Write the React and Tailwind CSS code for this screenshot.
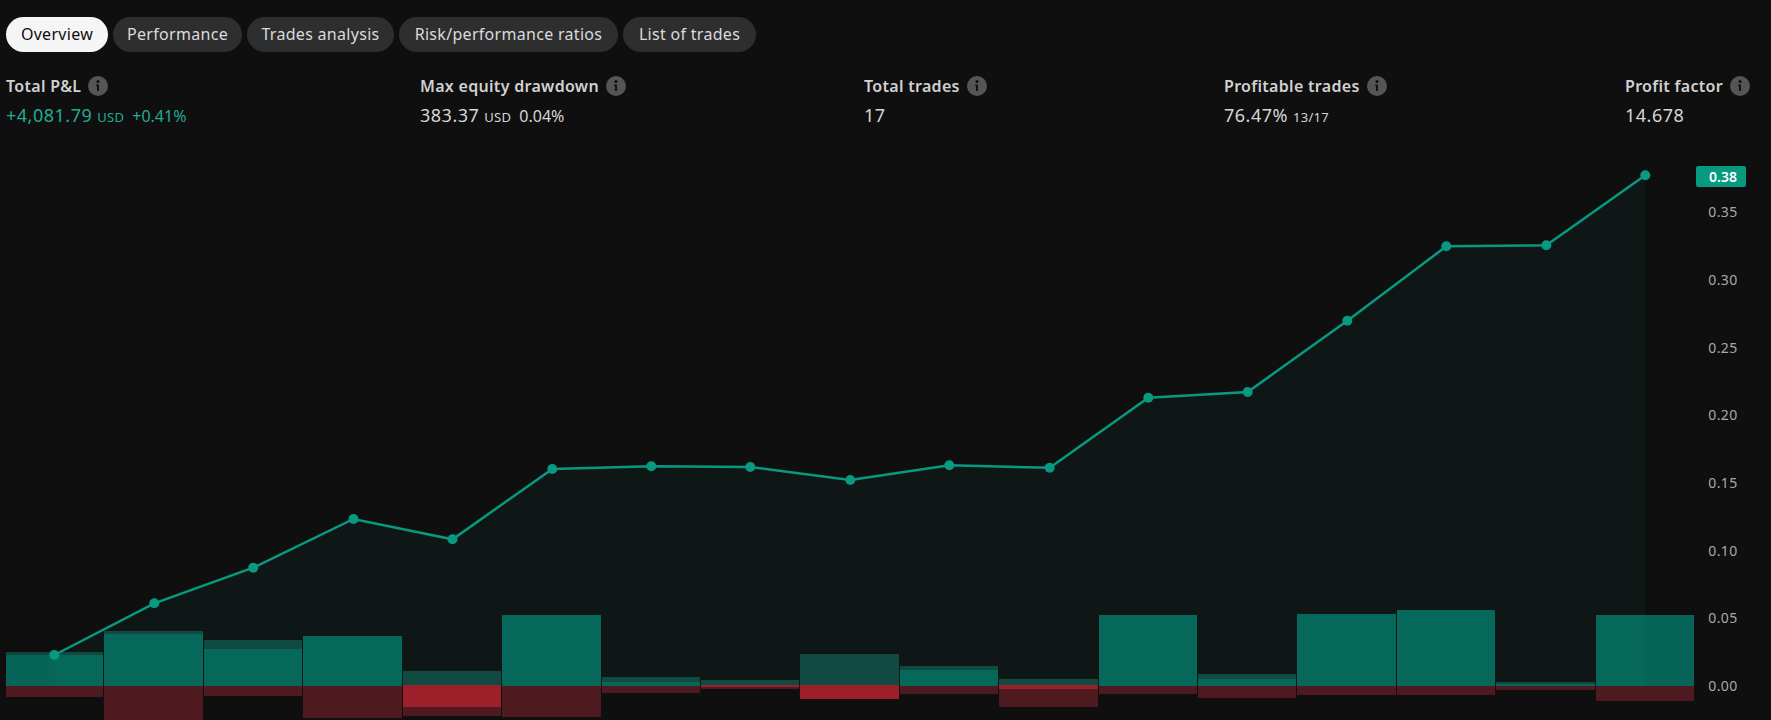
import React from "react";

const tabs = [
  { label: "Overview", width: "w-[102px]", active: true },
  { label: "Performance", width: "w-[129px]" },
  { label: "Trades analysis", width: "w-[147px]" },
  { label: "Risk/performance ratios", width: "w-[219px]" },
  { label: "List of trades", width: "w-[133px]" },
];

const points = [
  [54.3, 655], [154.3, 603.3], [253.2, 567.7], [353.5, 519], [452.5, 539.3],
  [552.3, 469], [651.3, 466.3], [750.3, 467], [850.3, 480], [949.3, 465.3],
  [1049.7, 467.7], [1148.3, 397.7], [1247.7, 392], [1347.3, 320.7], [1446.3, 246.3],
  [1546.3, 245.3], [1645.3, 175.3],
];

// top = dark band start, mid = solid green start, bright = end of the bright red part
const bars = [
  { x: 6, end: 103, top: 652, mid: 655, bottom: 697 },
  { x: 104, end: 203, top: 631, mid: 634, bottom: 722 },
  { x: 204, end: 302, top: 640, mid: 649, bottom: 696 },
  { x: 303, end: 402, top: 636, mid: 636, bottom: 718 },
  { x: 403, end: 501, top: 671, mid: 686, bright: 707, bottom: 716 },
  { x: 502, end: 601, top: 615, mid: 615, bottom: 717 },
  { x: 602, end: 700, top: 677, mid: 682, bottom: 693 },
  { x: 701, end: 799, top: 680, mid: 686, bright: 687, bottom: 689 },
  { x: 800, end: 899, top: 654, mid: 686, bright: 699, bottom: 699 },
  { x: 900, end: 998, top: 666, mid: 670, bottom: 694 },
  { x: 999, end: 1098, top: 679, mid: 686, bright: 689, bottom: 707 },
  { x: 1099, end: 1197, top: 615, mid: 615, bottom: 694 },
  { x: 1198, end: 1296, top: 674, mid: 679, bottom: 698 },
  { x: 1297, end: 1396, top: 614, mid: 614, bottom: 695 },
  { x: 1397, end: 1495, top: 610, mid: 610, bottom: 695 },
  { x: 1496, end: 1595, top: 682, mid: 684, bottom: 690 },
  { x: 1596, end: 1694, top: 615, mid: 615, bottom: 701 },
];

const ticks = [
  ["0.35", 212], ["0.30", 280], ["0.25", 347.5], ["0.20", 415], ["0.15", 483],
  ["0.10", 550.5], ["0.05", 618], ["0.00", 686],
];

const InfoIcon = () => (
  <svg width="20" height="20" viewBox="0 0 20 20" className="shrink-0">
    <circle cx="10" cy="10" r="10" fill="#555555" />
    <circle cx="10" cy="5.5" r="1.6" fill="#111111" />
    <path d="M8.2 8.6h2.8v6.4h-2v-4.8h-.8z" fill="#111111" />
  </svg>
);

const Stat = ({ label, children }) => (
  <div className="flex flex-col">
    <div className="flex h-5 items-center gap-[7px] text-base font-semibold tracking-[0.3px] text-[#d1d1d1]">
      <span>{label}</span>
      <InfoIcon />
    </div>
    <div className="mt-[5px] flex h-5 items-baseline whitespace-nowrap text-[#d6d6d6]">
      {children}
    </div>
  </div>
);

const Big = ({ children }) => (
  <span className="text-lg tracking-[0.5px]">{children}</span>
);
const Small = ({ children }) => (
  <span className="ml-[5px] text-[13px] tracking-[0.3px]">{children}</span>
);
const Pct = ({ children }) => (
  <span className="ml-[8px] text-base">{children}</span>
);

export default function App() {
  const line = points.map((p) => p.join(",")).join(" ");
  const area = `54.3,686 ${line} 1645.3,686`;

  return (
    <div className="h-[720px] w-full overflow-hidden bg-[#0f0f0f] pt-[17px] font-['Noto_Sans',sans-serif]">
      <div className="flex gap-[5px] pl-[6px]">
        {tabs.map((tab) => (
          <div
            key={tab.label}
            className={`flex h-[35px] items-center justify-center rounded-full pb-px text-base tracking-[0.3px] ${tab.width} ${
              tab.active ? "bg-[#f5f5f5] text-[#0f0f0f]" : "bg-[#2e2e2e] text-[#dbdbdb]"
            }`}
          >
            {tab.label}
          </div>
        ))}
      </div>

      <div className="mt-6 grid h-[54px] grid-cols-[414px_444px_360px_401px_auto] pl-[6px]">
        <Stat label="Total P&L">
          <div className="flex items-baseline text-[#22ab94]">
            <Big>+4,081.79</Big>
            <Small>USD</Small>
            <Pct>+0.41%</Pct>
          </div>
        </Stat>
        <Stat label="Max equity drawdown">
          <Big>383.37</Big>
          <Small>USD</Small>
          <Pct>0.04%</Pct>
        </Stat>
        <Stat label="Total trades">
          <Big>17</Big>
        </Stat>
        <Stat label="Profitable trades">
          <Big>76.47%</Big>
          <Small>13/17</Small>
        </Stat>
        <Stat label="Profit factor">
          <Big>14.678</Big>
        </Stat>
      </div>

      <svg width="1771" height="590" viewBox="0 130 1771 590" className="block">
        {bars.map((b) => (
          <g key={b.x} shapeRendering="crispEdges">
            <rect x={b.x} y={b.top} width={b.end - b.x} height={686 - b.top} fill="#12463d" />
            {b.mid < 686 && (
              <rect x={b.x} y={b.mid} width={b.end - b.x} height={686 - b.mid} fill="#066558" />
            )}
            <rect x={b.x} y={686} width={b.end - b.x} height={b.bottom - 686} fill="#4f1a1f" />
            {b.bright && (
              <rect x={b.x} y={685} width={b.end - b.x} height={b.bright - 685} fill="#9c1f29" />
            )}
          </g>
        ))}
        <polygon points={area} fill="#089981" fillOpacity="0.06" />
        <polyline points={line} fill="none" stroke="#089981" strokeWidth="2.5" />
        {points.map(([x, y]) => (
          <circle key={x} cx={x} cy={y} r="5" fill="#089981" />
        ))}
        {ticks.map(([label, y]) => (
          <text key={label} x="1723" y={y + 5} textAnchor="middle" fontSize="14" letterSpacing="0.4" fill="#a8a8a8">
            {label}
          </text>
        ))}
        <rect x="1696" y="166" width="50" height="21" rx="2" fill="#089981" />
        <text x="1723" y="181.5" textAnchor="middle" fontSize="14" fontWeight="600" fill="#ffffff">
          0.38
        </text>
      </svg>
    </div>
  );
}
